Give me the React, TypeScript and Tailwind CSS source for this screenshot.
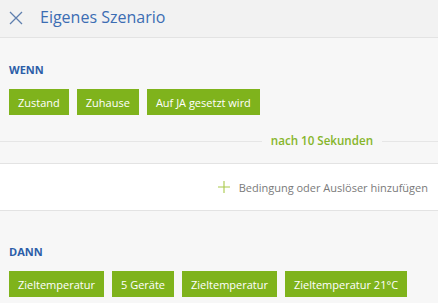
import React from "react";

const Chip = ({ children }: { children: React.ReactNode }) => (
  <div className="h-[26px] px-[9px] flex items-center bg-[#7fb31c] text-white text-[11px] leading-none whitespace-nowrap">
    {children}
  </div>
);

export default function App() {
  return (
    <div
      className="w-[438px] h-[303px] overflow-hidden bg-[#f7f7f7] flex flex-col"
      style={{ fontFamily: '"Open Sans", sans-serif' }}
    >
      <div className="h-[38px] shrink-0 bg-[#f2f2f2] border-b border-[#e3e3e3] flex items-center pl-[9px]">
        <svg width="14" height="14" viewBox="0 0 14 14" className="mt-[-2px]">
          <path d="M1 1 L13 13 M13 1 L1 13" stroke="#5f7fae" strokeWidth="1.3" fill="none" />
        </svg>
        <div className="ml-[17px] text-[16px] text-[#3c6db3] leading-none mt-[-3px]">Eigenes Szenario</div>
      </div>

      <div className="shrink-0 pt-[24px] pb-[14px] border-b border-[#e3e3e3]">
        <div className="px-[9px] text-[11px] font-bold text-[#2c5ea8] leading-[15px]">WENN</div>
        <div className="px-[9px] mt-[12px] flex gap-[8px]">
          <Chip>Zustand</Chip>
          <Chip>Zuhause</Chip>
          <Chip>Auf JA gesetzt wird</Chip>
        </div>
        <div className="mt-[18px] flex items-center h-[16px]">
          <div className="flex-1 h-px bg-[#e6e6e6]" />
          <div className="px-[9px] text-[11.6px] font-semibold text-[#86b52a] leading-none">nach 10 Sekunden</div>
          <div className="w-[56px] h-px bg-[#e6e6e6]" />
        </div>
      </div>

      <div className="shrink-0 h-[47px] bg-white border-b border-[#e3e3e3] flex items-center justify-end pr-[10px]">
        <svg width="12" height="12" viewBox="0 0 12 12">
          <path d="M6 0 V12 M0 6 H12" stroke="#a9c94a" strokeWidth="1.1" fill="none" />
        </svg>
        <div className="ml-[9px] text-[11px] text-[#7a7a7a] leading-none">Bedingung oder Auslöser hinzufügen</div>
      </div>

      <div className="pt-[33px]">
        <div className="px-[9px] text-[11px] font-bold text-[#2c5ea8] leading-[15px]">DANN</div>
        <div className="px-[9px] mt-[12px] flex gap-[8px]">
          <Chip>Zieltemperatur</Chip>
          <Chip>5 Geräte</Chip>
          <Chip>Zieltemperatur</Chip>
          <Chip>Zieltemperatur 21°C</Chip>
        </div>
      </div>
    </div>
  );
}
